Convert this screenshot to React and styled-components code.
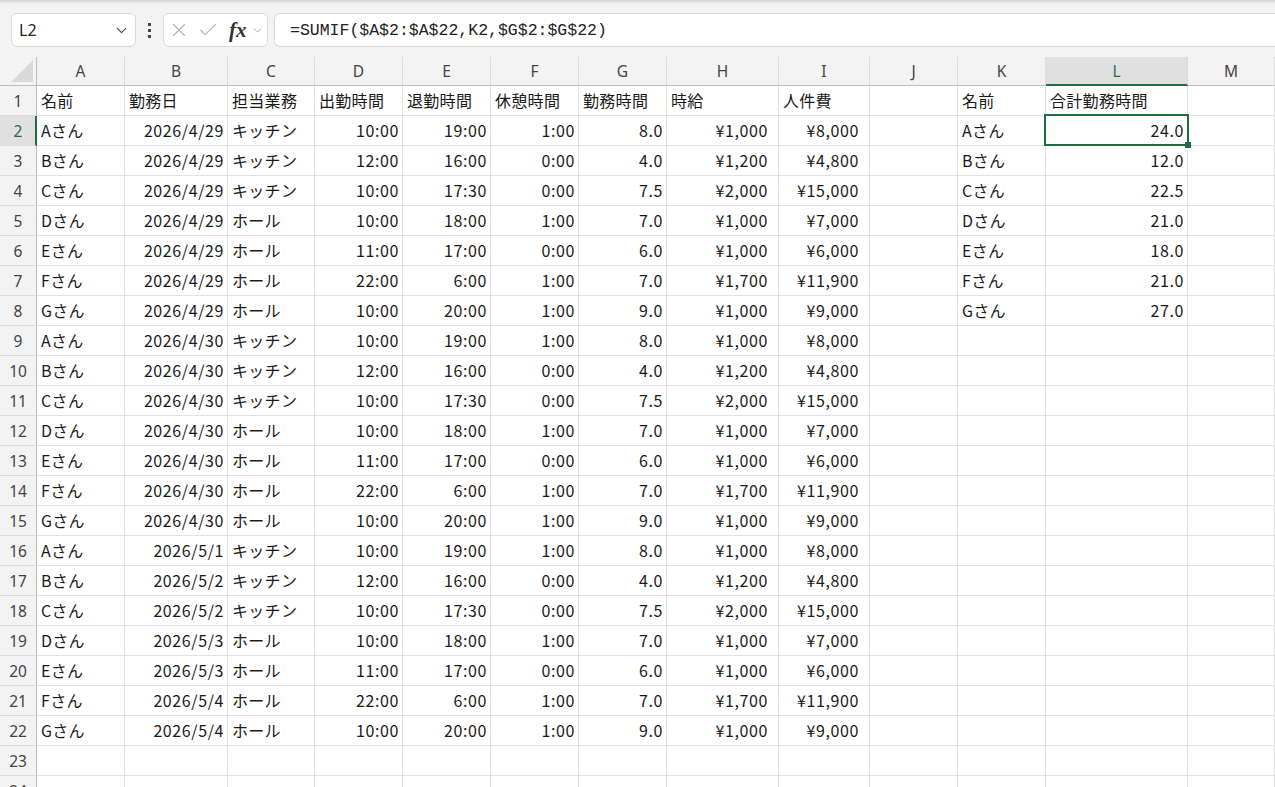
import React from 'react'
import styled, { createGlobalStyle } from 'styled-components'
import { ChevronDown, X, Check } from 'lucide-react'

const GREEN = '#1e6e42'

const staff = [
  ['Aさん', 'キッチン', '10:00', '19:00', '1:00', '8.0', '¥1,000', '¥8,000'],
  ['Bさん', 'キッチン', '12:00', '16:00', '0:00', '4.0', '¥1,200', '¥4,800'],
  ['Cさん', 'キッチン', '10:00', '17:30', '0:00', '7.5', '¥2,000', '¥15,000'],
  ['Dさん', 'ホール', '10:00', '18:00', '1:00', '7.0', '¥1,000', '¥7,000'],
  ['Eさん', 'ホール', '11:00', '17:00', '0:00', '6.0', '¥1,000', '¥6,000'],
  ['Fさん', 'ホール', '22:00', '6:00', '1:00', '7.0', '¥1,700', '¥11,900'],
  ['Gさん', 'ホール', '10:00', '20:00', '1:00', '9.0', '¥1,000', '¥9,000'],
]
const dates = [
  Array(7).fill('2026/4/29'),
  Array(7).fill('2026/4/30'),
  ['2026/5/1', '2026/5/2', '2026/5/2', '2026/5/3', '2026/5/3', '2026/5/4', '2026/5/4'],
]
const totals = [
  ['Aさん', '24.0'], ['Bさん', '12.0'], ['Cさん', '22.5'], ['Dさん', '21.0'],
  ['Eさん', '18.0'], ['Fさん', '21.0'], ['Gさん', '27.0'],
]

const letters = ['A', 'B', 'C', 'D', 'E', 'F', 'G', 'H', 'I', 'J', 'K', 'L', 'M']
const numCols = ['B', 'D', 'E', 'F', 'G', 'H', 'I', 'L']
const yenCols = ['H', 'I']

// build sheet rows, index 0 = row 1
const sheet = []
sheet.push(['名前', '勤務日', '担当業務', '出勤時間', '退勤時間', '休憩時間', '勤務時間', '時給', '人件費', '', '名前', '合計勤務時間', ''])
dates.forEach(d => {
  staff.forEach((s, i) => {
    sheet.push([s[0], d[i], ...s.slice(1), '', '', '', ''])
  })
})
totals.forEach((t, i) => {
  sheet[i + 1][10] = t[0]
  sheet[i + 1][11] = t[1]
})
sheet.push(Array(13).fill(''))
sheet.push(Array(13).fill(''))

function App() {
  return (
    <Page>
      <GlobalStyle />
      <TopEdge />
      <FormulaBar>
        <NameBox>
          <span>L2</span>
          <ChevronDown size={17} strokeWidth={1.6} color="#444" />
        </NameBox>
        <Dots>
          <i /><i /><i />
        </Dots>
        <FxBox>
          <X size={22} strokeWidth={1.2} color="#b4b4b4" />
          <Check size={22} strokeWidth={1.2} color="#b4b4b4" />
          <Fx>fx</Fx>
          <ChevronDown size={13} strokeWidth={1.4} color="#9a9a9a" />
        </FxBox>
        <FormulaInput>=SUMIF($A$2:$A$22,K2,$G$2:$G$22)</FormulaInput>
      </FormulaBar>

      <Grid>
        <Corner>
          <svg width="36" height="28" viewBox="0 0 36 28">
            <polygon points="11,25 33,3 33,25" fill="#d9d9d9" />
          </svg>
        </Corner>
        {letters.map(l => (
          <ColHead key={l} $active={l === 'L'}>{l}</ColHead>
        ))}

        {sheet.map((row, r) => (
          <React.Fragment key={r}>
            <RowHead $active={r === 1}>{r + 1}</RowHead>
            {row.map((v, c) => (
              <Cell
                key={c}
                $num={r > 0 && numCols.includes(letters[c])}
                $yen={r > 0 && yenCols.includes(letters[c])}
              >
                {v}
                {r === 1 && c === 11 && (
                  <Selection>
                    <Handle />
                  </Selection>
                )}
              </Cell>
            ))}
          </React.Fragment>
        ))}
      </Grid>
    </Page>
  )
}

export default App

const GlobalStyle = createGlobalStyle`
body{
    margin:0;
    background:#f3f3f3;
    font-family:"Noto Sans","Noto Sans CJK JP",sans-serif;
}
`

const Page = styled.div`
width:1275px;
height:787px;
overflow:hidden;
background:#f3f3f3;
`

const TopEdge = styled.div`
height:4px;
background:linear-gradient(#d4d4d4,#f3f3f3);
`

const FormulaBar = styled.div`
display:flex;
align-items:center;
height:34px;
padding:9px 0 10px 11px;
`

const NameBox = styled.div`
box-sizing:border-box;
width:125px;
height:34px;
display:flex;
align-items:center;
justify-content:space-between;
padding:0 5px 0 7px;
background:#fff;
border:1px solid #dadada;
border-radius:6px;
font-size:16px;
color:#222;
`

const Dots = styled.div`
width:27px;
display:flex;
flex-direction:column;
align-items:center;
gap:3px;
i{
    display:block;
    width:3px;
    height:3px;
    background:#444;
}
`

const FxBox = styled.div`
box-sizing:border-box;
width:105px;
height:34px;
display:flex;
align-items:center;
gap:7px;
padding:0 0 0 4px;
background:#fff;
border:1px solid #dadada;
border-radius:6px;
`

const Fx = styled.span`
font-family:"Liberation Serif",serif;
font-style:italic;
font-weight:bold;
font-size:21px;
color:#333;
margin-left:3px;
margin-right:-3px;
`

const FormulaInput = styled.div`
box-sizing:border-box;
flex:1;
margin-left:6px;
height:34px;
display:flex;
align-items:center;
padding-left:15px;
background:#fff;
border:1px solid #dadada;
border-right:none;
border-radius:6px 0 0 6px;
font-family:"Liberation Mono",monospace;
font-size:16.5px;
color:#222;
`

const Grid = styled.div`
display:grid;
grid-template-columns:37px 88px 103px 87px 88px 88px 88px 88px 112px 91px 88px 88px 142px 1fr;
grid-auto-rows:30px;
grid-template-rows:29px;
background:#fff;
`

const Corner = styled.div`
background:#f3f3f3;
border-right:1px solid #bdbdbd;
border-bottom:1px solid #bdbdbd;
box-sizing:border-box;
svg{ display:block; }
`

const ColHead = styled.div`
box-sizing:border-box;
display:flex;
align-items:center;
justify-content:center;
background:${p => p.$active ? '#e0e0e0' : '#f3f3f3'};
border-right:1px solid #dcdcdc;
border-bottom:${p => p.$active ? `2px solid ${GREEN}` : '1px solid #bdbdbd'};
padding-top:${p => p.$active ? '1px' : '0'};
font-size:15.5px;
color:${p => p.$active ? GREEN : '#444'};
`

const RowHead = styled.div`
box-sizing:border-box;
display:flex;
align-items:center;
justify-content:center;
background:${p => p.$active ? '#e0e0e0' : '#f3f3f3'};
border-right:${p => p.$active ? `2px solid ${GREEN}` : '1px solid #bdbdbd'};
border-bottom:1px solid #dcdcdc;
padding-left:${p => p.$active ? '1px' : '0'};
font-size:15.5px;
color:${p => p.$active ? GREEN : '#444'};
`

const Cell = styled.div`
position:relative;
box-sizing:border-box;
display:flex;
align-items:center;
justify-content:${p => p.$num ? 'flex-end' : 'flex-start'};
padding:0 ${p => p.$yen ? '10px' : '3px'} 1px 4px;
border-right:1px solid #e1e1e1;
border-bottom:1px solid #e1e1e1;
font-family:"Noto Sans CJK JP",sans-serif;
font-size:16px;
letter-spacing:${p => p.$num ? '0.6px' : '0.3px'};
color:#1a1a1a;
white-space:nowrap;
`

const Selection = styled.div`
position:absolute;
top:-2px;
left:-2px;
right:-2px;
bottom:-1px;
border:2px solid ${GREEN};
z-index:2;
pointer-events:none;
`

const Handle = styled.div`
position:absolute;
right:-4px;
bottom:-4px;
width:6px;
height:6px;
background:${GREEN};
`
